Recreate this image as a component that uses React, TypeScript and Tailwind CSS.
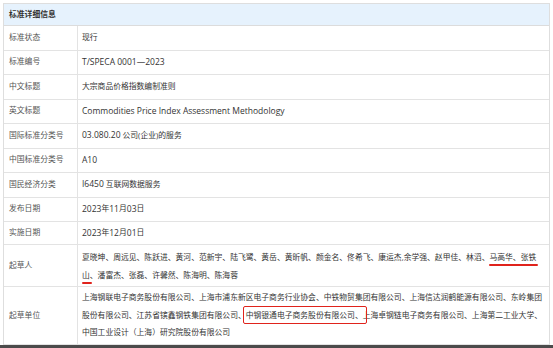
import React from 'react';

const L = ({ children }: { children: React.ReactNode }) => <span className="text-[8.5px]">{children}</span>;

const rows: { label: string; value: React.ReactNode }[] = [
  { label: '标准状态', value: '现行' },
  { label: '标准编号', value: <L>T/SPECA 0001—2023</L> },
  { label: '中文标题', value: '大宗商品价格指数编制准则' },
  { label: '英文标题', value: <L>Commodities Price Index Assessment Methodology</L> },
  { label: '国际标准分类号', value: <><L>03.080.20</L> 公司(企业)的服务</> },
  { label: '中国标准分类号', value: <L>A10</L> },
  { label: '国民经济分类', value: <><L>I6450</L> 互联网数据服务</> },
  { label: '发布日期', value: <><L>2023</L>年<L>11</L>月<L>03</L>日</> },
  { label: '实施日期', value: <><L>2023</L>年<L>12</L>月<L>01</L>日</> },
];

function Underlined({ children }: { children: React.ReactNode }) {
  return (
    <span className="relative">
      {children}
      <span className="absolute left-0 right-[-2px] bottom-[-4px] h-[1.5px] bg-[#e0231c] rounded-full" />
    </span>
  );
}

function Boxed({ children }: { children: React.ReactNode }) {
  return (
    <span className="relative">
      {children}
      <span className="absolute left-[-3px] right-[-4px] top-[-4px] bottom-[-4px] border-[1.5px] border-[#e0231c] rounded-[2px]" />
    </span>
  );
}

export default function App() {
  return (
    <div
      className="w-[553px] h-[348px] bg-white overflow-hidden flex flex-col text-[7.8px] text-[#444]"
      style={{ fontFamily: '"Open Sans", "Noto Sans CJK SC", sans-serif' }}
    >
      <div className="mx-[3px] mt-[3px] border border-b-0 border-[#dedede] flex-1 flex flex-col">
        <div className="h-[22px] flex items-center bg-[#e6f2fd] px-[5px] border-b border-[#dcdcdc] font-semibold text-[#333]">
          标准详细信息
        </div>

        {rows.map((r, i) => (
          <div key={r.label} className={`flex border-b border-[#e3e3e3] ${i === 8 ? 'h-[23px]' : 'h-[24.5px]'}`}>
            <div className="w-[74px] shrink-0 flex items-center pl-[5px] border-r border-[#e3e3e3] text-[#555]">
              {r.label}
            </div>
            <div className="flex-1 flex items-center pl-[4px] text-[#333] whitespace-pre">{r.value}</div>
          </div>
        ))}

        <div className="flex h-[42px] border-b border-[#e3e3e3]">
          <div className="w-[74px] shrink-0 flex items-center pl-[5px] border-r border-[#e3e3e3] text-[#555]">
            起草人
          </div>
          <div className="flex-1 flex flex-col justify-center pl-[4px] text-[#333] leading-[18px] whitespace-nowrap">
            <div>
              夏晓坤、周远见、陈跃进、黄河、范新宇、陆飞鹭、黄岳、黄昕帆、颜金名、佟希飞、康运杰,余学强、赵甲佳、林滔、
              <Underlined>马高华、张铁</Underlined>
            </div>
            <div>
              <Underlined>山</Underlined>、潘富杰、张磊、许馨然、陈海明、陈海蓉
            </div>
          </div>
        </div>

        <div className="flex h-[58px] border-b border-[#e3e3e3]">
          <div className="w-[74px] shrink-0 flex items-center pl-[5px] border-r border-[#e3e3e3] text-[#555]">
            起草单位
          </div>
          <div className="flex-1 flex flex-col justify-center pl-[4px] text-[#333] leading-[17.5px] whitespace-nowrap">
            <div>上海钢联电子商务股份有限公司、上海市浦东新区电子商务行业协会、中铁物贸集团有限公司、上海信达润鹤能源有限公司、东岭集团</div>
            <div>
              股份有限公司、江苏省镔鑫钢铁集团有限公司、
              <Boxed>中钢银通电子商务股份有限公司、</Boxed>
              上海卓钢链电子商务有限公司、上海第二工业大学、
            </div>
            <div>中国工业设计（上海）研究院股份有限公司</div>
          </div>
        </div>
      </div>
      <div className="h-[4px] bg-[#4b4b4b] shrink-0" />
    </div>
  );
}
